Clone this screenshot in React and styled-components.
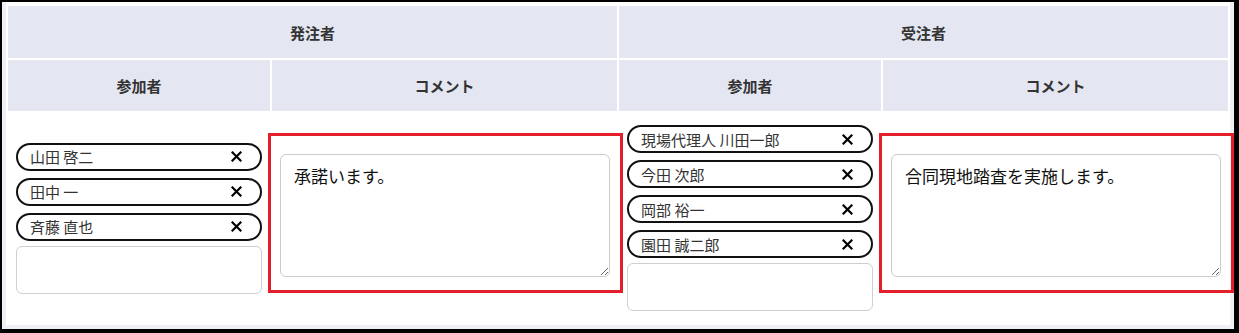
import React from "react";
import styled, { createGlobalStyle } from "styled-components";

const GlobalStyle = createGlobalStyle`
  html, body {
    margin: 0;
    padding: 0;
    background: #fff;
  }
  body {
    font-family: "Noto Sans CJK JP", "Noto Sans", sans-serif;
    color: #333;
  }
`;

const Frame = styled.div`
  width: 1239px;
  height: 333px;
  box-sizing: border-box;
  border-style: solid;
  border-color: #000;
  border-width: 2px 5px 4px 2px;
  background: #eef0f6;
  overflow: hidden;
`;

const Wrap = styled.div`
  padding: 0 4px 4px 4px;
  background: #eef0f6;
`;

const Table = styled.table`
  width: 100%;
  table-layout: fixed;
  border-collapse: separate;
  border-spacing: 2px;
  background: #fff;
  border-top: 2px solid #fff;
`;

const Th = styled.th`
  background: #e4e7f1;
  color: #333;
  font-size: 15px;
  font-weight: 700;
  height: ${(p) => p.h}px;
  padding: 0;
  text-align: center;
  vertical-align: middle;
`;

const Td = styled.td`
  background: #fff;
  padding: ${(p) => (p.comment ? "0" : "12px 8px")};
  vertical-align: ${(p) => (p.comment ? "top" : "middle")};
`;

const ChipList = styled.div`
  display: flex;
  flex-direction: column;
  gap: 7px;
`;

const Chip = styled.div`
  display: flex;
  align-items: center;
  justify-content: space-between;
  height: 28px;
  box-sizing: border-box;
  border: 2px solid #111;
  border-radius: 16px;
  padding: 0 12px;
  font-size: 15px;
  color: #333;
`;

const Remove = styled.button`
  display: flex;
  align-items: center;
  justify-content: center;
  border: 0;
  background: transparent;
  padding: 0;
  margin-right: 6px;
  width: 12px;
  height: 12px;
  cursor: pointer;
`;

const AddBox = styled.div`
  height: 48px;
  margin-top: -2px;
  box-sizing: border-box;
  border: 1px solid #cfcfcf;
  border-radius: 6px;
  background: #fff;
`;

const Highlight = styled.div`
  position: relative;
  z-index: 1;
  margin: 20px -6px 0 -4px;
  border: 3px solid #e3202a;
  padding: 18px 10px 13px 9px;
`;

const Comment = styled.textarea`
  display: block;
  width: 100%;
  height: 123px;
  box-sizing: border-box;
  border: 1px solid #cccccc;
  border-radius: 6px;
  padding: 9px 13px;
  font-family: "Noto Sans CJK JP", "Noto Sans", sans-serif;
  font-size: 17px;
  line-height: 1.4;
  color: #111;
  background: #fff;
  outline: none;
`;

const XIcon = () => (
  <svg width="11" height="11" viewBox="0 0 11 11">
    <path d="M1.5 1.5 L9.5 9.5 M9.5 1.5 L1.5 9.5" stroke="#000" strokeWidth="2.2" strokeLinecap="square" />
  </svg>
);

const Participants = ({ names }) => (
  <ChipList>
    {names.map((n) => (
      <Chip key={n}>
        <span>{n}</span>
        <Remove aria-label="remove">
          <XIcon />
        </Remove>
      </Chip>
    ))}
    <AddBox />
  </ChipList>
);

const ordererNames = ["山田 啓二", "田中 一", "斉藤 直也"];
const contractorNames = ["現場代理人 川田一郎", "今田 次郎", "岡部 裕一", "園田 誠二郎"];

export default function App() {
  return (
    <>
      <GlobalStyle />
      <Frame>
        <Wrap>
          <Table>
            <colgroup>
              <col style={{ width: "262px" }} />
              <col style={{ width: "345px" }} />
              <col style={{ width: "262px" }} />
              <col />
            </colgroup>
            <thead>
              <tr>
                <Th colSpan={2} h={52}>発注者</Th>
                <Th colSpan={2} h={52}>受注者</Th>
              </tr>
              <tr>
                <Th h={51}>参加者</Th>
                <Th h={51}>コメント</Th>
                <Th h={51}>参加者</Th>
                <Th h={51}>コメント</Th>
              </tr>
            </thead>
            <tbody>
              <tr>
                <Td>
                  <Participants names={ordererNames} />
                </Td>
                <Td comment>
                  <Highlight>
                    <Comment defaultValue="承諾います。" />
                  </Highlight>
                </Td>
                <Td>
                  <Participants names={contractorNames} />
                </Td>
                <Td comment>
                  <Highlight>
                    <Comment defaultValue="合同現地踏査を実施します。" />
                  </Highlight>
                </Td>
              </tr>
            </tbody>
          </Table>
        </Wrap>
      </Frame>
    </>
  );
}
